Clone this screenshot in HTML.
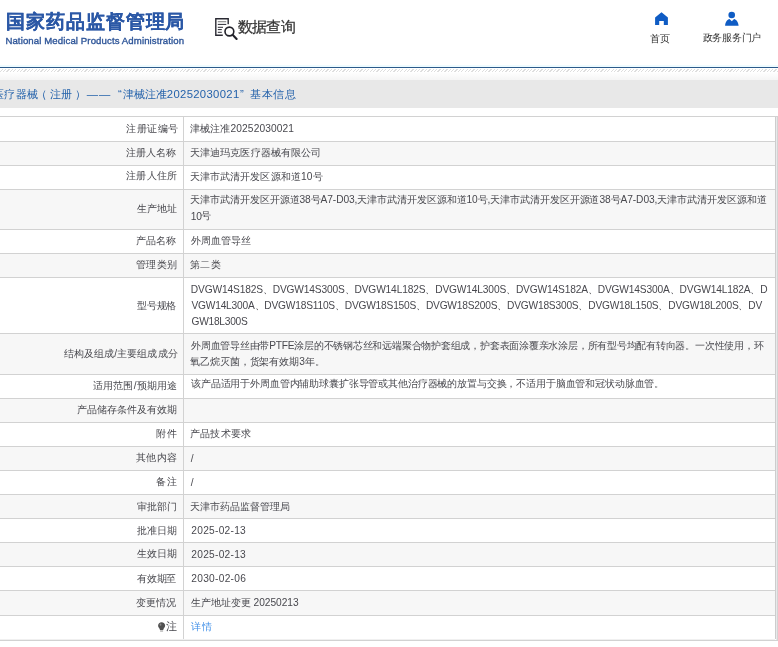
<!DOCTYPE html>
<html><head><meta charset="utf-8"><style>
html,body{margin:0;padding:0;background:#fff;}
body{width:778px;height:647px;overflow:hidden;position:relative;font-family:"Liberation Sans",sans-serif;}
.t{position:absolute;white-space:nowrap;line-height:1.2;}
.bl{position:absolute;left:0;top:67px;width:778px;height:1px;background:#2c5a8a;}
.cy{position:absolute;left:0;top:65px;width:778px;height:2px;background:#eefbff;}
.hatch{position:absolute;left:0;top:69px;width:778px;height:3px;background:repeating-linear-gradient(135deg,#fff 0px,#fff 1.5px,#dedede 1.5px,#dedede 2.4px);}
.grad{position:absolute;left:0;top:72px;width:778px;height:8px;background:linear-gradient(#fff,#f5f5f5);}
.band{position:absolute;left:0;top:80px;width:778px;height:28px;background:#e8e8e8;}
.s{position:absolute;left:0;width:775px;background:#f7f7f7;}
.hl{position:absolute;left:0;width:778px;height:1px;background:#d2d2d2;}
.vd{position:absolute;left:183px;top:117px;width:1px;height:523px;background:#d2d2d2;}
.rb{position:absolute;left:775px;top:117px;width:1px;height:522px;background:#cdcdcd;}
.rb2{position:absolute;left:776px;top:117px;width:1px;height:523px;background:#e8e8ea;}
.rb3{position:absolute;left:777px;top:117px;width:1px;height:523px;background:#d4d4d4;}
</style></head><body>
<svg style="position:absolute;left:214px;top:17px" width="24" height="24" viewBox="0 0 24 24">
<path d="M8.8 18.2H1.8V1.8H14.2V7.2" fill="none" stroke="#2a2a33" stroke-width="1.4"/>
<path d="M3.8 4.7H12.2" stroke="#888" stroke-width="1.1"/>
<path d="M3.8 7.4H12.3M3.8 10.3H9M3.8 12.6H7.8M3.8 15.3H7.8" stroke="#2a2a33" stroke-width="1.0"/>
<circle cx="15.4" cy="14.5" r="4.4" fill="none" stroke="#22222a" stroke-width="1.6"/>
<path d="M18.6 17.8L22.6 21.9" stroke="#22222a" stroke-width="2.1" stroke-linecap="round"/>
</svg>
<svg style="position:absolute;left:654px;top:12px" width="15" height="14" viewBox="0 0 15 14"><path d="M7.5 0.3L1.1 5.4V12.9H5.2V9.1H9.8V12.9H13.9V5.4Z" fill="#0f5cc4"/></svg>
<svg style="position:absolute;left:725px;top:11px" width="15" height="15" viewBox="0 0 15 15"><circle cx="6.7" cy="4" r="3.3" fill="#0f5cc4"/><path d="M0.1 14.7C0.4 10.5 2.4 8.6 4.5 7.9L6.8 10.3L9.1 7.9C11.2 8.6 13.2 10.5 13.6 14.7Z" fill="#0f5cc4"/></svg>
<div class="cy"></div>
<div class="bl"></div>
<div class="hatch"></div>
<div class="grad"></div>
<div class="band"></div>
<div class="s" style="top:142px;height:23px"></div><div class="s" style="top:190px;height:39px"></div><div class="s" style="top:254px;height:23px"></div><div class="s" style="top:334px;height:40px"></div><div class="s" style="top:399px;height:23px"></div><div class="s" style="top:447px;height:23px"></div><div class="s" style="top:495px;height:23px"></div><div class="s" style="top:543px;height:23px"></div><div class="s" style="top:591px;height:24px"></div><div class="hl" style="top:116px"></div><div class="hl" style="top:141px"></div><div class="hl" style="top:165px"></div><div class="hl" style="top:189px"></div><div class="hl" style="top:229px"></div><div class="hl" style="top:253px"></div><div class="hl" style="top:277px"></div><div class="hl" style="top:333px"></div><div class="hl" style="top:374px"></div><div class="hl" style="top:398px"></div><div class="hl" style="top:422px"></div><div class="hl" style="top:446px"></div><div class="hl" style="top:470px"></div><div class="hl" style="top:494px"></div><div class="hl" style="top:518px"></div><div class="hl" style="top:542px"></div><div class="hl" style="top:566px"></div><div class="hl" style="top:590px"></div><div class="hl" style="top:615px"></div><div class="hl" style="top:640px"></div>
<div class="vd"></div><div style="position:absolute;left:0;top:639px;width:775px;height:1px;background:#f0f0f0"></div>
<div class="rb"></div><div class="rb2"></div><div class="rb3"></div>
<svg style="position:absolute;left:157.5px;top:621.8px" width="8" height="10" viewBox="0 0 8 10"><path d="M3.6 0.2C1.6 0.2 0.1 1.7 0.1 3.6c0 1.3 0.7 2.2 1.3 2.9c0.4 0.5 0.5 1 0.5 1.6H5.3c0-0.6 0.1-1.1 0.5-1.6c0.6-0.7 1.3-1.6 1.3-2.9C7.1 1.7 5.6 0.2 3.6 0.2z" fill="#505050"/><path d="M2.1 9H5.1" stroke="#888" stroke-width="0.9"/><ellipse cx="2.5" cy="2.7" rx="0.9" ry="1.1" fill="#8a8a8a"/></svg>
<div style="position:absolute;left:0;top:0;width:778px;height:647px;will-change:transform">
<div class="t" style="left:6.20px;top:10.97px;font-size:18.5px;letter-spacing:0.913px;color:#2b58a6;font-weight:bold;-webkit-text-stroke:0.15px #2b58a6;">国家药品监督管理局</div>
<div class="t" style="left:5.40px;top:35.10px;font-size:9.6px;letter-spacing:0.110px;color:#2f5699;-webkit-text-stroke:0.35px #2f5699;">National Medical Products Administration</div>
<div class="t" style="left:237.92px;top:17.51px;font-size:15px;letter-spacing:-0.767px;color:#333;-webkit-text-stroke:0.25px #333;">数据查询</div>
<div class="t" style="left:650.02px;top:32.56px;font-size:10.0px;letter-spacing:0.000px;color:#333;">首页</div>
<div class="t" style="left:702.72px;top:32.37px;font-size:10.0px;letter-spacing:-0.260px;color:#333;">政务服务门户</div>
<div class="t" style="left:4.00px;top:88.33px;font-size:11.3px;letter-spacing:0.650px;color:#2462ab;">疗器械</div>
<div class="t" style="left:36.28px;top:88.13px;font-size:11.3px;letter-spacing:0.000px;color:#2462ab;">（</div>
<div class="t" style="left:50.28px;top:88.33px;font-size:11.3px;letter-spacing:-0.600px;color:#2462ab;">注册</div>
<div class="t" style="left:74.72px;top:88.13px;font-size:11.3px;letter-spacing:0.000px;color:#2462ab;">）</div>
<div class="t" style="left:-7.14px;top:88.13px;font-size:11.3px;letter-spacing:0.000px;color:#2462ab;">医</div>
<div class="t" style="left:86.82px;top:88.13px;font-size:11.3px;letter-spacing:0.900px;color:#2462ab;">——</div>
<div class="t" style="left:117.96px;top:88.13px;font-size:11.3px;letter-spacing:0.000px;color:#2462ab;">“</div>
<div class="t" style="left:122.86px;top:88.13px;font-size:11.3px;letter-spacing:-0.067px;color:#2462ab;">津械注准</div>
<div class="t" style="left:166.86px;top:87.77px;font-size:11.3px;letter-spacing:0.320px;color:#2462ab;">20252030021</div>
<div class="t" style="left:239.96px;top:88.13px;font-size:11.3px;letter-spacing:0.000px;color:#2462ab;">”</div>
<div class="t" style="left:250.18px;top:87.53px;font-size:11.3px;letter-spacing:0.467px;color:#2462ab;">基本信息</div>
<div class="t" style="left:126.00px;top:122.83px;font-size:10.2px;letter-spacing:0.575px;color:#48484e;">注册证编号</div>
<div class="t" style="left:126.00px;top:146.65px;font-size:10.2px;letter-spacing:0.075px;color:#48484e;">注册人名称</div>
<div class="t" style="left:126.00px;top:170.33px;font-size:10.2px;letter-spacing:0.325px;color:#48484e;">注册人住所</div>
<div class="t" style="left:136.82px;top:203.33px;font-size:10.2px;letter-spacing:0.133px;color:#48484e;">生产地址</div>
<div class="t" style="left:136.00px;top:235.07px;font-size:10.2px;letter-spacing:0.100px;color:#48484e;">产品名称</div>
<div class="t" style="left:136.00px;top:259.48px;font-size:10.2px;letter-spacing:0.433px;color:#48484e;">管理类别</div>
<div class="t" style="left:137.00px;top:300.49px;font-size:10.2px;letter-spacing:-0.233px;color:#48484e;">型号规格</div>
<div class="t" style="left:64.00px;top:348.25px;font-size:10.2px;letter-spacing:0.073px;color:#48484e;">结构及组成/主要组成成分</div>
<div class="t" style="left:92.86px;top:380.41px;font-size:10.2px;letter-spacing:0.200px;color:#48484e;">适用范围/预期用途</div>
<div class="t" style="left:77.32px;top:404.43px;font-size:10.2px;letter-spacing:-0.011px;color:#48484e;">产品储存条件及有效期</div>
<div class="t" style="left:155.64px;top:428.35px;font-size:10.2px;letter-spacing:1.500px;color:#48484e;">附件</div>
<div class="t" style="left:136.00px;top:452.13px;font-size:10.2px;letter-spacing:0.433px;color:#48484e;">其他内容</div>
<div class="t" style="left:155.64px;top:475.90px;font-size:10.2px;letter-spacing:1.500px;color:#48484e;">备注</div>
<div class="t" style="left:137.00px;top:500.61px;font-size:10.2px;letter-spacing:0.100px;color:#48484e;">审批部门</div>
<div class="t" style="left:137.00px;top:525.44px;font-size:10.2px;letter-spacing:0.100px;color:#48484e;">批准日期</div>
<div class="t" style="left:137.00px;top:548.48px;font-size:10.2px;letter-spacing:0.100px;color:#48484e;">生效日期</div>
<div class="t" style="left:137.00px;top:572.58px;font-size:10.2px;letter-spacing:-0.233px;color:#48484e;">有效期至</div>
<div class="t" style="left:136.00px;top:596.66px;font-size:10.2px;letter-spacing:0.100px;color:#48484e;">变更情况</div>
<div class="t" style="left:166.16px;top:620.17px;font-size:10.9px;letter-spacing:0.000px;color:#48484e;">注</div>
<div class="t" style="left:190.00px;top:122.83px;font-size:10.2px;letter-spacing:0.121px;color:#48484e;">津械注准20252030021</div>
<div class="t" style="left:190.00px;top:146.65px;font-size:10.2px;letter-spacing:0.100px;color:#48484e;">天津迪玛克医疗器械有限公司</div>
<div class="t" style="left:189.64px;top:171.13px;font-size:10.2px;letter-spacing:0.123px;color:#48484e;">天津市武清开发区源和道10号</div>
<div class="t" style="left:191.00px;top:235.41px;font-size:10.2px;letter-spacing:0.000px;color:#48484e;">外周血管导丝</div>
<div class="t" style="left:189.64px;top:259.48px;font-size:10.2px;letter-spacing:0.850px;color:#48484e;">第二类</div>
<div class="t" style="left:191.00px;top:378.21px;font-size:10.2px;letter-spacing:-0.143px;color:#48484e;">该产品适用于外周血管内辅助球囊扩张导管或其他治疗器械的放置与交换，不适用于脑血管和冠状动脉血管。</div>
<div class="t" style="left:190.00px;top:428.29px;font-size:10.2px;letter-spacing:0.200px;color:#48484e;">产品技术要求</div>
<div class="t" style="left:190.64px;top:453.45px;font-size:10.2px;letter-spacing:0.000px;color:#48484e;">/</div>
<div class="t" style="left:190.64px;top:477.13px;font-size:10.2px;letter-spacing:0.000px;color:#48484e;">/</div>
<div class="t" style="left:190.00px;top:501.49px;font-size:10.2px;letter-spacing:0.011px;color:#48484e;">天津市药品监督管理局</div>
<div class="t" style="left:191.32px;top:525.01px;font-size:10.2px;letter-spacing:0.256px;color:#48484e;">2025-02-13</div>
<div class="t" style="left:191.32px;top:549.15px;font-size:10.2px;letter-spacing:0.256px;color:#48484e;">2025-02-13</div>
<div class="t" style="left:191.32px;top:573.37px;font-size:10.2px;letter-spacing:0.267px;color:#48484e;">2030-02-06</div>
<div class="t" style="left:191.00px;top:596.83px;font-size:10.2px;letter-spacing:-0.043px;color:#48484e;">生产地址变更 20250213</div>
<div class="t" style="left:191.32px;top:621.01px;font-size:10.2px;letter-spacing:1.100px;color:#3d8ee8;">详情</div>
<div class="t" style="left:190.36px;top:194.39px;font-size:10.2px;letter-spacing:-0.081px;color:#48484e;">天津市武清开发区开源道38号A7-D03,天津市武清开发区源和道10号,天津市武清开发区开源道38号A7-D03,天津市武清开发区源和道</div>
<div class="t" style="left:190.74px;top:210.99px;font-size:10.2px;letter-spacing:-0.200px;color:#48484e;">10</div>
<div class="t" style="left:200.70px;top:210.49px;font-size:10.2px;letter-spacing:0.000px;color:#48484e;">号</div>
<div class="t" style="left:190.86px;top:284.40px;font-size:10.2px;letter-spacing:-0.149px;color:#48484e;">DVGW14S182S、DVGW14S300S、DVGW14L182S、DVGW14L300S、DVGW14S182A、DVGW14S300A、DVGW14L182A、D</div>
<div class="t" style="left:191.46px;top:300.30px;font-size:10.2px;letter-spacing:-0.204px;color:#48484e;">VGW14L300A、DVGW18S110S、DVGW18S150S、DVGW18S200S、DVGW18S300S、DVGW18L150S、DVGW18L200S、DV</div>
<div class="t" style="left:191.46px;top:316.01px;font-size:10.2px;letter-spacing:-0.250px;color:#48484e;">GW18L300S</div>
<div class="t" style="left:191.00px;top:340.29px;font-size:10.2px;letter-spacing:-0.227px;color:#48484e;">外周血管导丝由带PTFE涂层的不锈钢芯丝和远端聚合物护套组成，护套表面涂覆亲水涂层，所有型号均配有转向器。一次性使用，环</div>
<div class="t" style="left:190.00px;top:355.81px;font-size:10.2px;letter-spacing:-0.077px;color:#48484e;">氧乙烷灭菌，货架有效期3年。</div>
</div>
</body></html>
